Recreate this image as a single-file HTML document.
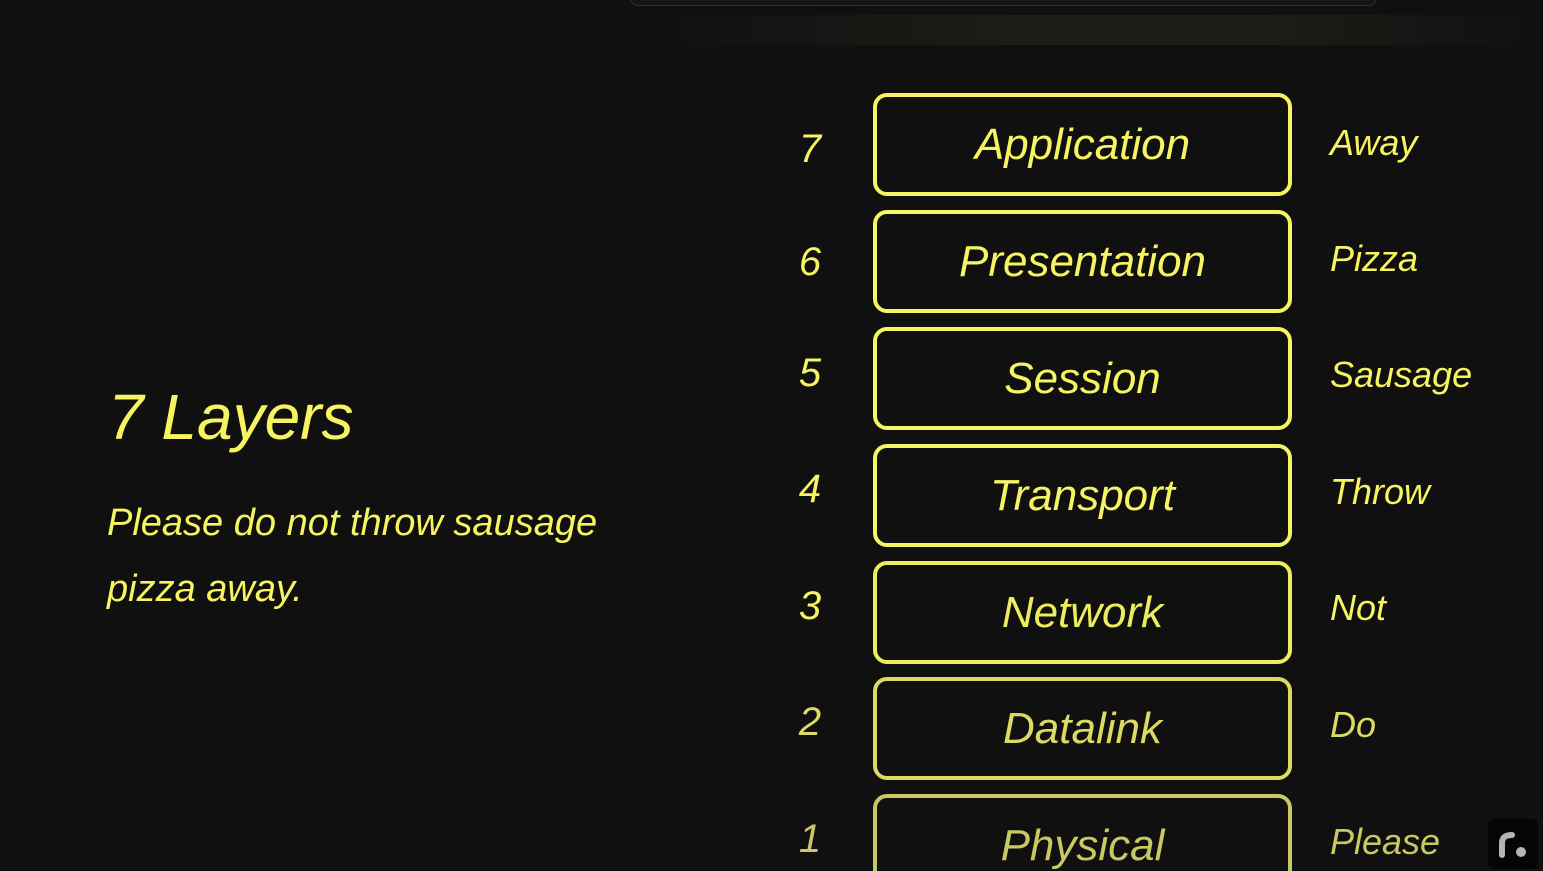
<!DOCTYPE html><html><head><style>
html,body{margin:0;width:1543px;height:871px;overflow:hidden}
body{background:#101010;font-family:"Liberation Sans",sans-serif;font-style:italic;color:#f6f460;position:relative}
.top{position:absolute;left:630px;top:-10px;width:745px;height:14px;border:1px solid #333;border-radius:10px;background:#161616}
.band{position:absolute;left:680px;top:15px;width:840px;height:30px;background:linear-gradient(90deg,#111,#1c1d17 40%,#1c1d17 70%,#111)}
.box{position:absolute;left:873px;width:411px;height:95px;border:4px solid #f6f460;border-radius:14px;display:flex;align-items:center;justify-content:center;font-size:44px}
.n{position:absolute;left:790px;width:40px;text-align:center;font-size:40px}
.w{position:absolute;left:1330px;font-size:36px}
h1{position:absolute;left:108px;top:380px;margin:0;font-size:64px;font-weight:normal}
p{position:absolute;left:107px;top:490px;margin:0;font-size:38px;line-height:66px;width:540px}
.logo{position:absolute;left:1488px;top:819px;width:50px;height:50px;background:#050505;border-radius:6px}
</style></head><body>
<div class="top"></div><div class="band"></div>
<h1>7 Layers</h1>
<p>Please do not throw sausage pizza away.</p>
<div class="box" style="top:93px">Application</div><div class="n" style="top:127px">7</div><div class="w" style="top:122px">Away</div>
<div class="box" style="top:210px">Presentation</div><div class="n" style="top:240px">6</div><div class="w" style="top:238px">Pizza</div>
<div class="box" style="top:327px">Session</div><div class="n" style="top:351px">5</div><div class="w" style="top:354px">Sausage</div>
<div class="box" style="top:444px">Transport</div><div class="n" style="top:467px">4</div><div class="w" style="top:471px">Throw</div>
<div class="box" style="top:561px;border-color:#eeec5e;color:#eeec5e">Network</div><div class="n" style="top:584px">3</div><div class="w" style="top:587px">Not</div>
<div class="box" style="top:677px;border-color:#dcda62;color:#dcda62">Datalink</div><div class="n" style="top:700px;color:#dcda62">2</div><div class="w" style="top:704px;color:#dcda62">Do</div>
<div class="box" style="top:794px;border-color:#c9c862;color:#c9c862">Physical</div><div class="n" style="top:817px;color:#c9c862">1</div><div class="w" style="top:821px;color:#c9c862">Please</div>
<div class="logo"><svg width="50" height="50"><path d="M14 36V24q0-8 10-8" stroke="#b5b5b5" stroke-width="6" fill="none" stroke-linecap="round"/><circle cx="33" cy="33" r="5" fill="#b5b5b5"/></svg></div>
</body></html>
